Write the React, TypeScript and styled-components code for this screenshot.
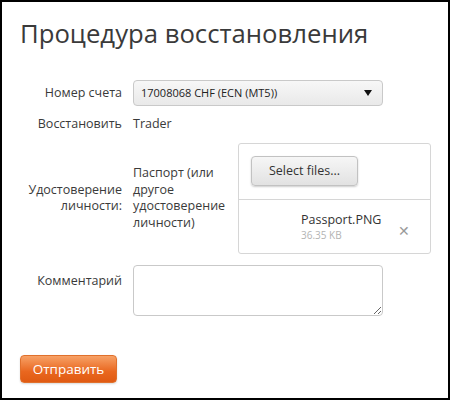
import React from "react";
import styled, { createGlobalStyle } from "styled-components";

const Global = createGlobalStyle`
  html, body { margin: 0; padding: 0; background: #fff; }
  body { font-family: "Open Sans", "Noto Sans", sans-serif; color: #333; }
  * { box-sizing: border-box; }
`;

const Frame = styled.div`
  width: 450px;
  height: 400px;
  border: 2px solid #000;
  padding: 14px 0 0 18px;
  display: flex;
  flex-direction: column;
`;

const Title = styled.h1`
  margin: 0 0 28px 0;
  font-size: 25.7px;
  font-weight: 400;
  line-height: 36px;
  color: #3a3a3a;
`;

const Form = styled.div`
  display: grid;
  grid-template-columns: 102px 1fr;
  column-gap: 11px;
  row-gap: 10px;
  font-size: 12.5px;
  line-height: 16.5px;
`;

const Label = styled.div<{ $top?: boolean }>`
  text-align: right;
  align-self: ${(p) => (p.$top ? "start" : "center")};
  padding-top: ${(p) => (p.$top ? "9px" : "0")};
  color: #3a3a3a;
`;

const Value = styled.div`
  align-self: center;
  color: #3a3a3a;
`;

const Select = styled.div`
  width: 250px;
  height: 26px;
  border: 1px solid #c9c9c9;
  border-radius: 4px;
  background: linear-gradient(#f7f7f7, #e9e9e9);
  display: flex;
  align-items: center;
  justify-content: space-between;
  padding: 0 10px 0 7px;
  font-size: 11px;
  color: #222;
`;

const UploadRow = styled.div`
  display: flex;
  align-items: center;
  gap: 10px;
`;

const Description = styled.div`
  width: 95px;
  color: #3a3a3a;
`;

const UploadBox = styled.div`
  width: 193px;
  height: 111px;
  border: 1px solid #d6d6d6;
  border-radius: 3px;
  display: flex;
  flex-direction: column;
`;

const Toolbar = styled.div`
  height: 56px;
  padding: 12px 0 0 12px;
  border-bottom: 1px solid #d6d6d6;
`;

const SelectButton = styled.button`
  width: 107px;
  height: 30px;
  border: 1px solid #c2c2c2;
  border-radius: 4px;
  background: linear-gradient(#f6f6f6, #e2e2e2);
  box-shadow: 0 1px 2px rgba(0, 0, 0, 0.2);
  font-family: "Open Sans", sans-serif;
  font-size: 12.5px;
  color: #333;
  padding: 0;
`;

const FileItem = styled.div`
  display: flex;
  align-items: center;
  padding: 11px 0 0 62px;
`;

const FileInfo = styled.div`
  display: flex;
  flex-direction: column;
  width: 97px;
`;

const FileName = styled.span`
  font-size: 12.5px;
  line-height: 17px;
  color: #333;
`;

const FileSize = styled.span`
  font-size: 10px;
  line-height: 14px;
  color: #b3b3b3;
`;

const Remove = styled.span`
  font-size: 14px;
  color: #9a9a9a;
  margin-top: 10px;
`;

const Comment = styled.textarea`
  width: 250px;
  height: 51px;
  margin-top: 1px;
  border: 1px solid #c9c9c9;
  border-radius: 4px;
  resize: both;
  font-family: "Open Sans", sans-serif;
`;

const Submit = styled.button`
  margin-top: 39px;
  width: 97px;
  height: 28px;
  border: 1px solid #e0702c;
  border-radius: 4px;
  background: linear-gradient(#f7a166, #e9671f 60%, #e05a12);
  box-shadow: 0 1px 2px rgba(0, 0, 0, 0.15);
  color: #fff;
  font-family: "Open Sans", sans-serif;
  font-size: 13.5px;
  padding: 0;
  align-self: flex-start;
  margin-left: 0;
`;

export default function App() {
  return (
    <>
      <Global />
      <Frame>
        <Title>Процедура восстановления</Title>
        <Form>
          <Label>Номер счета</Label>
          <Select>
            <span>17008068 CHF (ECN (MT5))</span>
            <svg width="8" height="6" viewBox="0 0 8 6">
              <path d="M0 0 L8 0 L4 6 Z" fill="#111" />
            </svg>
          </Select>
          <Label>Восстановить</Label>
          <Value>Trader</Value>
          <Label>
            Удостоверение
            <br />
            личности:
          </Label>
          <UploadRow>
            <Description>Паспорт (или другое удостоверение личности)</Description>
            <UploadBox>
              <Toolbar>
                <SelectButton>Select files...</SelectButton>
              </Toolbar>
              <FileItem>
                <FileInfo>
                  <FileName>Passport.PNG</FileName>
                  <FileSize>36.35 KB</FileSize>
                </FileInfo>
                <Remove>✕</Remove>
              </FileItem>
            </UploadBox>
          </UploadRow>
          <Label $top>Комментарий</Label>
          <Comment />
        </Form>
        <Submit>Отправить</Submit>
      </Frame>
    </>
  );
}
